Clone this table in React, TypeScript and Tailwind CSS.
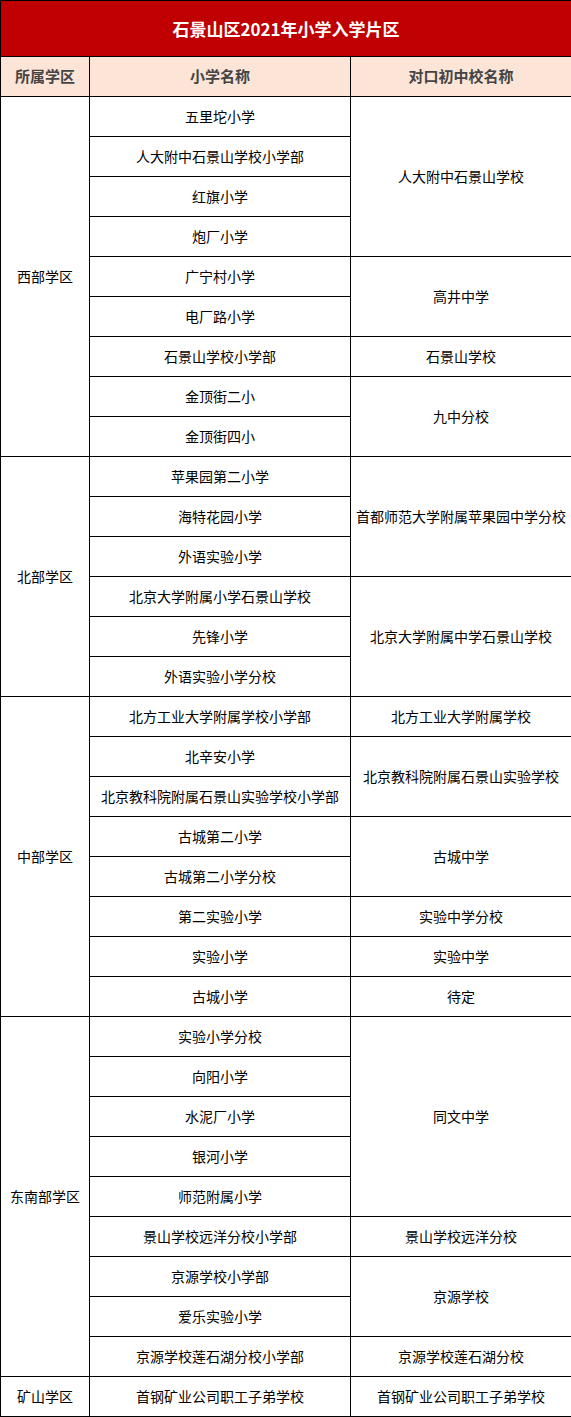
type Group = {
  area: string;
  rows: { school: string; middle?: string; span?: number }[];
};

const groups: Group[] = [
  {
    area: "西部学区",
    rows: [
      { school: "五里坨小学", middle: "人大附中石景山学校", span: 4 },
      { school: "人大附中石景山学校小学部" },
      { school: "红旗小学" },
      { school: "炮厂小学" },
      { school: "广宁村小学", middle: "高井中学", span: 2 },
      { school: "电厂路小学" },
      { school: "石景山学校小学部", middle: "石景山学校", span: 1 },
      { school: "金顶街二小", middle: "九中分校", span: 2 },
      { school: "金顶街四小" },
    ],
  },
  {
    area: "北部学区",
    rows: [
      { school: "苹果园第二小学", middle: "首都师范大学附属苹果园中学分校", span: 3 },
      { school: "海特花园小学" },
      { school: "外语实验小学" },
      { school: "北京大学附属小学石景山学校", middle: "北京大学附属中学石景山学校", span: 3 },
      { school: "先锋小学" },
      { school: "外语实验小学分校" },
    ],
  },
  {
    area: "中部学区",
    rows: [
      { school: "北方工业大学附属学校小学部", middle: "北方工业大学附属学校", span: 1 },
      { school: "北辛安小学", middle: "北京教科院附属石景山实验学校", span: 2 },
      { school: "北京教科院附属石景山实验学校小学部" },
      { school: "古城第二小学", middle: "古城中学", span: 2 },
      { school: "古城第二小学分校" },
      { school: "第二实验小学", middle: "实验中学分校", span: 1 },
      { school: "实验小学", middle: "实验中学", span: 1 },
      { school: "古城小学", middle: "待定", span: 1 },
    ],
  },
  {
    area: "东南部学区",
    rows: [
      { school: "实验小学分校", middle: "同文中学", span: 5 },
      { school: "向阳小学" },
      { school: "水泥厂小学" },
      { school: "银河小学" },
      { school: "师范附属小学" },
      { school: "景山学校远洋分校小学部", middle: "景山学校远洋分校", span: 1 },
      { school: "京源学校小学部", middle: "京源学校", span: 2 },
      { school: "爱乐实验小学" },
      { school: "京源学校莲石湖分校小学部", middle: "京源学校莲石湖分校", span: 1 },
    ],
  },
  {
    area: "矿山学区",
    rows: [{ school: "首钢矿业公司职工子弟学校", middle: "首钢矿业公司职工子弟学校", span: 1 }],
  },
];

const cell = "border border-black text-center align-middle p-0";

export default function App() {
  return (
    <div
      className="w-[571px] bg-white text-[14px] text-black"
      style={{ fontFamily: '"Noto Sans CJK SC", "Noto Sans", sans-serif' }}
    >
      <table className="w-[571px] border-collapse table-fixed">
        <colgroup>
          <col className="w-[89px]" />
          <col className="w-[261px]" />
          <col className="w-[221px]" />
        </colgroup>
        <thead>
          <tr className="h-[56px]">
            <th colSpan={3} className={`${cell} bg-[#c00000] text-white text-[17px] font-bold`}>
              石景山区2021年小学入学片区
            </th>
          </tr>
          <tr className="h-[40px]">
            <th className={`${cell} bg-[#fce4d6] text-[#444] text-[15px] font-bold`}>所属学区</th>
            <th className={`${cell} bg-[#fce4d6] text-[#444] text-[15px] font-bold`}>小学名称</th>
            <th className={`${cell} bg-[#fce4d6] text-[#444] text-[15px] font-bold`}>对口初中校名称</th>
          </tr>
        </thead>
        <tbody>
          {groups.map((g) =>
            g.rows.map((r, i) => (
              <tr key={g.area + r.school} className="h-[40px]">
                {i === 0 && (
                  <td rowSpan={g.rows.length} className={cell}>
                    {g.area}
                  </td>
                )}
                <td className={cell}>{r.school}</td>
                {r.middle && (
                  <td rowSpan={r.span} className={cell}>
                    {r.middle}
                  </td>
                )}
              </tr>
            )),
          )}
        </tbody>
      </table>
    </div>
  );
}
